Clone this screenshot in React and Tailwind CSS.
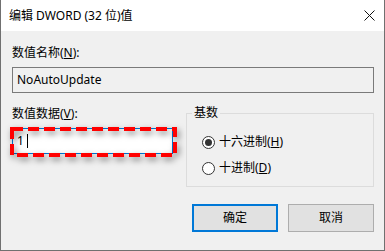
import React from "react";

const font = { fontFamily: '"Noto Sans", "Noto Sans CJK SC", sans-serif' };

const Radio = ({ checked, children }) => (
  <div className="flex items-center h-[16px]">
    <span className="w-[13px] h-[13px] rounded-full border border-[#333333] bg-white flex items-center justify-center">
      {checked && <span className="w-[7px] h-[7px] rounded-full bg-[#333333]" />}
    </span>
    <span className="ml-[4px] text-[12px] leading-[16px]">{children}</span>
  </div>
);

export default function App() {
  return (
    <div
      className="w-[385px] h-[251px] bg-[#f0f0f0] border-x border-b border-[#707070] flex flex-col text-black"
      style={font}
    >
      {/* title bar */}
      <div className="h-[31px] bg-white flex items-center justify-between pl-[8px] pr-[9px]">
        <span className="text-[12px] leading-[16px]">编辑 DWORD (32 位)值</span>
        <svg width="11" height="11" viewBox="0 0 11 11">
          <path d="M0.5 0.5 L10.5 10.5 M10.5 0.5 L0.5 10.5" stroke="#111" strokeWidth="1" />
        </svg>
      </div>

      <div className="flex-1 pl-[11px] pr-[10px] pt-[14px] flex flex-col">
        <div className="text-[12px] leading-[16px]">
          数值名称(<span className="underline">N</span>):
        </div>
        <div className="mt-[6px] h-[26px] border border-[#7a7a7a] bg-[#f0f0f0] flex items-center px-[4px] text-[12px]">
          NoAutoUpdate
        </div>

        <div className="flex mt-[13px]">
          <div className="w-[161px] flex flex-col">
            <div className="text-[12px] leading-[16px]">
              数值数据(<span className="underline">V</span>):
            </div>
            <div className="relative mt-[6px] h-[26px] border border-[#0078d7] bg-white flex items-center pl-[4px] text-[12px]">
              <span>1</span>
              <span className="ml-[3px] w-[1px] h-[14px] bg-black" />
              {/* red dashed highlight */}
              <svg
                className="absolute left-[-3px] top-[-2px] drop-shadow-[2px_3px_3px_rgba(0,0,0,0.5)]"
                width="167"
                height="30"
                viewBox="0 0 167 30"
              >
                <rect x="2" y="2" width="163" height="26" fill="none" stroke="#ff0000" strokeWidth="4" strokeDasharray="11 5" />
              </svg>
            </div>
          </div>

          <div className="relative ml-[13px] mt-[7px] w-[188px] h-[74px] border border-[#dcdcdc] pl-[15px] pt-[20px] flex flex-col gap-[10px]">
            <span className="absolute left-[5px] top-[-9px] px-[2px] bg-[#f0f0f0] text-[12px] leading-[16px]">基数</span>
            <Radio checked>
              十六进制(<span className="underline">H</span>)
            </Radio>
            <Radio>
              十进制(<span className="underline">D</span>)
            </Radio>
          </div>
        </div>

        <div className="flex justify-end gap-[10px] mt-[17px]">
          <button className="w-[86px] h-[28px] border-2 border-[#0078d7] bg-[#e1e1e1] text-[12px]">确定</button>
          <button className="w-[86px] h-[28px] border border-[#adadad] bg-[#e1e1e1] text-[12px]">取消</button>
        </div>
      </div>
    </div>
  );
}
